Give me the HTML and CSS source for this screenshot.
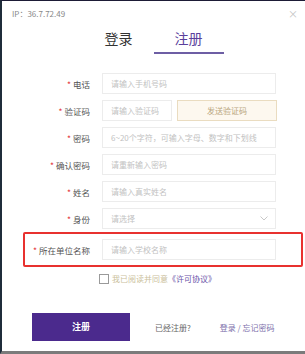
FILE: index.html
```html
<!DOCTYPE html>
<html lang="zh-CN">

<head>
    <meta charset="UTF-8">
    <meta name="viewport" content="width=device-width, initial-scale=1.0">
    <title>注册</title>
    <link rel="stylesheet" href="styles.css">
</head>

<body>
    <div class="screen">
        <div class="modal">
            <div class="modal-header">
                <span class="ip">IP：36.7.72.49</span>
                <span class="close">×</span>
            </div>

            <div class="tabs">
                <div class="tab">登录</div>
                <div class="tab active">注册</div>
            </div>

            <form class="form">
                <div class="row">
                    <label class="label"><i>*</i>电话</label>
                    <div class="input">请输入手机号码</div>
                </div>
                <div class="row">
                    <label class="label"><i>*</i>验证码</label>
                    <div class="code-group">
                        <div class="input input-code">请输入验证码</div>
                        <div class="send-btn">发送验证码</div>
                    </div>
                </div>
                <div class="row">
                    <label class="label"><i>*</i>密码</label>
                    <div class="input">6~20个字符，可输入字母、数字和下划线</div>
                </div>
                <div class="row">
                    <label class="label"><i>*</i>确认密码</label>
                    <div class="input">请重新输入密码</div>
                </div>
                <div class="row">
                    <label class="label"><i>*</i>姓名</label>
                    <div class="input">请输入真实姓名</div>
                </div>
                <div class="row">
                    <label class="label"><i>*</i>身份</label>
                    <div class="input select">
                        <span>请选择</span>
                        <svg class="chevron" width="8" height="5" viewBox="0 0 8 5">
                            <path d="M0.5 0.5 L4 4 L7.5 0.5" fill="none" stroke="#c8c8c8" stroke-width="1"/>
                        </svg>
                    </div>
                </div>
                <div class="row row-highlight">
                    <label class="label"><i>*</i>所在单位名称</label>
                    <div class="input">请输入学校名称</div>
                </div>

                <div class="agree">
                    <span class="checkbox"></span>
                    <span class="agree-text">我已阅读并同意</span>
                    <a class="agree-link">《许可协议》</a>
                </div>

                <div class="actions">
                    <div class="submit">注册</div>
                    <span class="registered">已经注册?</span>
                    <a class="login-link">登录 / 忘记密码</a>
                </div>
            </form>
        </div>
    </div>
</body>

</html>
```

FILE: styles.css
```css
body {
    margin: 0;
    font-family: "Noto Sans CJK SC", "Liberation Sans", sans-serif;
    background: #1c1c30;
}

.screen {
    width: 305px;
    height: 354px;
    box-sizing: border-box;
    border-top: 1px solid #1d1b36;
    border-left: 2px solid #1f2c3a;
    border-bottom: 3px solid #7b7b7b;
    background: #fff;
    overflow: hidden;
}

.modal {
    color: #555;
}

.modal-header {
    height: 24px;
    display: flex;
    align-items: center;
    justify-content: space-between;
    padding: 0 7px 0 10px;
    font-size: 8px;
    color: #888;
}

.close {
    font-size: 10px;
    color: #c4c4c4;
}

.tabs {
    display: flex;
    justify-content: center;
}

.tab {
    width: 70px;
    text-align: center;
    font-size: 14px;
    line-height: 20px;
    padding: 3px 0 4px;
    color: #333;
    border-bottom: 2px solid transparent;
}

.tab.active {
    color: #5b3f9c;
    border-bottom-color: #6d5ea4;
}

.form {
    margin-top: 19px;
}

.row {
    display: grid;
    grid-template-columns: 88px 174px;
    column-gap: 12px;
    align-items: center;
    margin-bottom: 6px;
}

.label {
    text-align: right;
    font-size: 8.5px;
    color: #555;
}

.label i {
    font-style: normal;
    color: #e4393c;
    margin-right: 2px;
}

.input {
    height: 21px;
    box-sizing: border-box;
    border: 1px solid #ececec;
    padding: 0 8px;
    font-size: 8px;
    line-height: 19px;
    color: #c2c2c2;
    white-space: nowrap;
    overflow: hidden;
}

.code-group {
    display: flex;
    gap: 5px;
    width: 175px;
}

.input-code {
    width: 70px;
}

.send-btn {
    flex: 1;
    height: 21px;
    box-sizing: border-box;
    border: 1px solid #eadcc0;
    background: #fdf8ef;
    color: #b9a67e;
    font-size: 8px;
    line-height: 19px;
    text-align: center;
}

.select {
    display: flex;
    justify-content: space-between;
    align-items: center;
}

.chevron {
    margin-right: -1px;
}

.row-highlight {
    grid-template-columns: 65px 174px;
    margin: -3px 2px 0 21px;
    padding: 5px 0;
    border: 2px solid #e8312f;
    border-radius: 2px;
}

.agree {
    display: flex;
    align-items: center;
    justify-content: center;
    margin: 6px 0 0 8px;
    height: 11px;
    font-size: 8px;
}

.checkbox {
    width: 10px;
    height: 10px;
    box-sizing: border-box;
    border: 1px solid #9a9a9a;
    margin-right: 3px;
}

.agree-text {
    color: #cbbf9c;
}

.agree-link {
    color: #6a52a8;
}

.actions {
    display: flex;
    align-items: center;
    margin: 29px 0 0 30px;
    font-size: 8px;
}

.submit {
    width: 98px;
    height: 28px;
    line-height: 28px;
    text-align: center;
    background: #4b2a8d;
    color: #fff;
    font-size: 9px;
    font-weight: bold;
}

.registered {
    margin-left: 25px;
    color: #666;
}

.login-link {
    margin-left: 29px;
    color: #7c6fab;
}
```
